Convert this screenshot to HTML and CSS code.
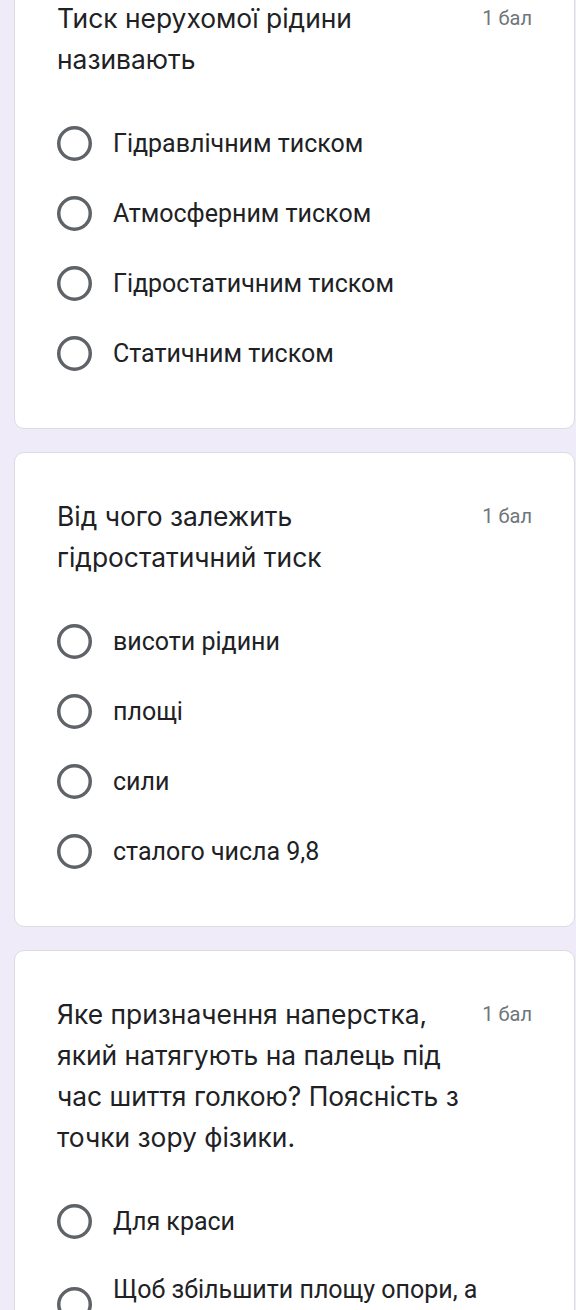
FILE: index.html
```html
<!DOCTYPE html>
<html lang="uk">
  <head>
    <meta charset="UTF-8" />
    <meta name="viewport" content="width=device-width, initial-scale=1.0" />
    <title>Тест: тиск рідини</title>
    <link rel="stylesheet" href="styles.css">
  </head>
  <body>
    <main class="form">
      <!-- Питання 1 -->
      <section class="card">
        <div class="question">
          <div class="question-title">Тиск нерухомої рідини називають</div>
          <div class="points">1 бал</div>
        </div>
        <div class="options">
          <label class="option">
            <svg class="radio" viewBox="0 0 35 35"><circle cx="17.5" cy="17.5" r="15.75" /></svg>
            <span class="option-text">Гідравлічним тиском</span>
          </label>
          <label class="option">
            <svg class="radio" viewBox="0 0 35 35"><circle cx="17.5" cy="17.5" r="15.75" /></svg>
            <span class="option-text">Атмосферним тиском</span>
          </label>
          <label class="option">
            <svg class="radio" viewBox="0 0 35 35"><circle cx="17.5" cy="17.5" r="15.75" /></svg>
            <span class="option-text">Гідростатичним тиском</span>
          </label>
          <label class="option">
            <svg class="radio" viewBox="0 0 35 35"><circle cx="17.5" cy="17.5" r="15.75" /></svg>
            <span class="option-text">Статичним тиском</span>
          </label>
        </div>
      </section>

      <!-- Питання 2 -->
      <section class="card">
        <div class="question">
          <div class="question-title">Від чого залежить гідростатичний тиск</div>
          <div class="points">1 бал</div>
        </div>
        <div class="options">
          <label class="option">
            <svg class="radio" viewBox="0 0 35 35"><circle cx="17.5" cy="17.5" r="15.75" /></svg>
            <span class="option-text">висоти рідини</span>
          </label>
          <label class="option">
            <svg class="radio" viewBox="0 0 35 35"><circle cx="17.5" cy="17.5" r="15.75" /></svg>
            <span class="option-text">площі</span>
          </label>
          <label class="option">
            <svg class="radio" viewBox="0 0 35 35"><circle cx="17.5" cy="17.5" r="15.75" /></svg>
            <span class="option-text">сили</span>
          </label>
          <label class="option">
            <svg class="radio" viewBox="0 0 35 35"><circle cx="17.5" cy="17.5" r="15.75" /></svg>
            <span class="option-text">сталого числа 9,8</span>
          </label>
        </div>
      </section>

      <!-- Питання 3 -->
      <section class="card">
        <div class="question">
          <div class="question-title">Яке призначення наперстка, який натягують на палець під час шиття голкою? Поясність з точки зору фізики.</div>
          <div class="points">1 бал</div>
        </div>
        <div class="options">
          <label class="option">
            <svg class="radio" viewBox="0 0 35 35"><circle cx="17.5" cy="17.5" r="15.75" /></svg>
            <span class="option-text">Для краси</span>
          </label>
          <label class="option">
            <svg class="radio" viewBox="0 0 35 35"><circle cx="17.5" cy="17.5" r="15.75" /></svg>
            <span class="option-text">Щоб збільшити площу опори, а отже зменшити тиск</span>
          </label>
        </div>
      </section>
    </main>
  </body>
</html>
```

FILE: styles.css
```css
body {
  margin: 0;
  background: rgb(240, 235, 248);
  font-family: Roboto, "Liberation Sans", sans-serif;
  color: #202124;
  overflow: hidden;
}

.form {
  display: flex;
  flex-direction: column;
  gap: 23px;
  margin: -46px 1px 0 14px;
}

.card {
  background: #fff;
  border: 1px solid #dadce0;
  border-radius: 10px;
  padding: 43px 42px 40px 42px;
}

/* question header: title + points */
.question {
  display: flex;
  align-items: flex-start;
  margin-bottom: 28px;
}
.question-title {
  flex: 1;
  font-family: Inter, Roboto, sans-serif;
  font-size: 26.4px;
  line-height: 41px;
  color: #202124;
}
.points {
  margin-left: 20px;
  margin-top: 2px;
  font-size: 20px;
  line-height: 36px;
  color: #70757a;
  white-space: nowrap;
}

.options {
  display: flex;
  flex-direction: column;
}
.option {
  display: flex;
  align-items: center;
  gap: 21px;
  padding: 17.5px 0;
}
.radio {
  flex: none;
  width: 35px;
  height: 35px;
}
.radio circle {
  fill: none;
  stroke: #5f6368;
  stroke-width: 3.5;
}
.option-text {
  font-size: 25px;
  line-height: 31px;
  padding-right: 40px;
}
```
